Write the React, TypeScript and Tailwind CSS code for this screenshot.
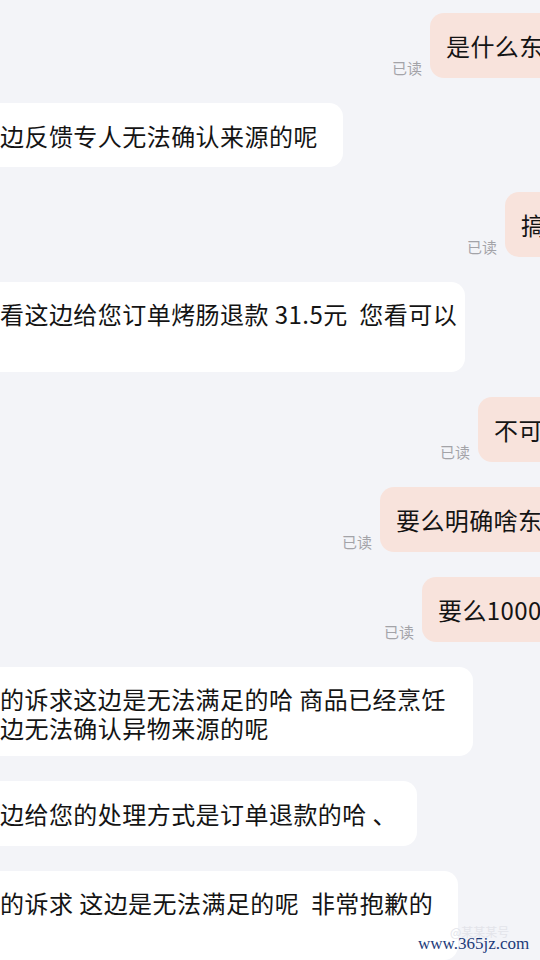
import React from "react";

function Right({ text, wClass }: { text: string; wClass: string }) {
  return (
    <div className="flex justify-end items-end gap-[8px]">
      <span className="text-[15px] leading-[18px] text-[#a3a3a8] mb-[1px]">已读</span>
      <div
        className={`${wClass} h-[65px] rounded-l-[14px] bg-[#f8e3dc] flex items-center pl-[16px] overflow-hidden whitespace-pre text-[24px] leading-[29px] tracking-[0.4px] text-[#141414]`}
      >
        {text}
      </div>
    </div>
  );
}

function Left({ lines, cls }: { lines: string[]; cls: string }) {
  return (
    <div
      className={`${cls} bg-white rounded-r-[14px] text-[24px] leading-[29px] tracking-[0.45px] text-[#141414] whitespace-pre overflow-hidden ${
        lines.length === 1 ? "flex items-center" : "pt-[17px]"
      }`}
    >
      <div>
        {lines.map((l, i) => (
          <div key={i}>{l === "" ? "\u00a0" : l}</div>
        ))}
      </div>
    </div>
  );
}

export default function App() {
  return (
    <div className="w-[540px] h-[960px] bg-[#f3f4f8] overflow-hidden relative flex flex-col gap-[25px] pt-[13px] font-['Noto_Sans_CJK_SC','Noto_Sans',sans-serif]">
      <Right text="是什么东西" wClass="w-[110px]" />
      <Left lines={["边反馈专人无法确认来源的呢"]} cls="w-[343px] h-[65px]" />
      <Right text="搞" wClass="w-[35px]" />
      <Left lines={["看这边给您订单烤肠退款 31.5元  您看可以", ""]} cls="w-[465px] h-[90px]" />
      <Right text="不可以" wClass="w-[62px]" />
      <Right text="要么明确啥东西" wClass="w-[160px]" />
      <Right text="要么1000" wClass="w-[118px]" />
      <Left
        lines={["的诉求这边是无法满足的哈 商品已经烹饪", "边无法确认异物来源的呢"]}
        cls="w-[473px] h-[90px]"
      />
      <Left lines={["边给您的处理方式是订单退款的哈 、"]} cls="w-[417px] h-[65px]" />
      <Left lines={["的诉求 这边是无法满足的呢  非常抱歉的", ""]} cls="w-[458px] h-[90px]" />

      <div className="absolute left-[450px] top-[925px] text-[12px] leading-[14px] text-[#e3e4ea]">
        @某某某号
      </div>
      <div className="absolute left-[418px] top-[934px] text-[17px] leading-[20px] text-[#1d3b7a] font-['Liberation_Serif',serif]">
        www.365jz.com
      </div>
    </div>
  );
}
